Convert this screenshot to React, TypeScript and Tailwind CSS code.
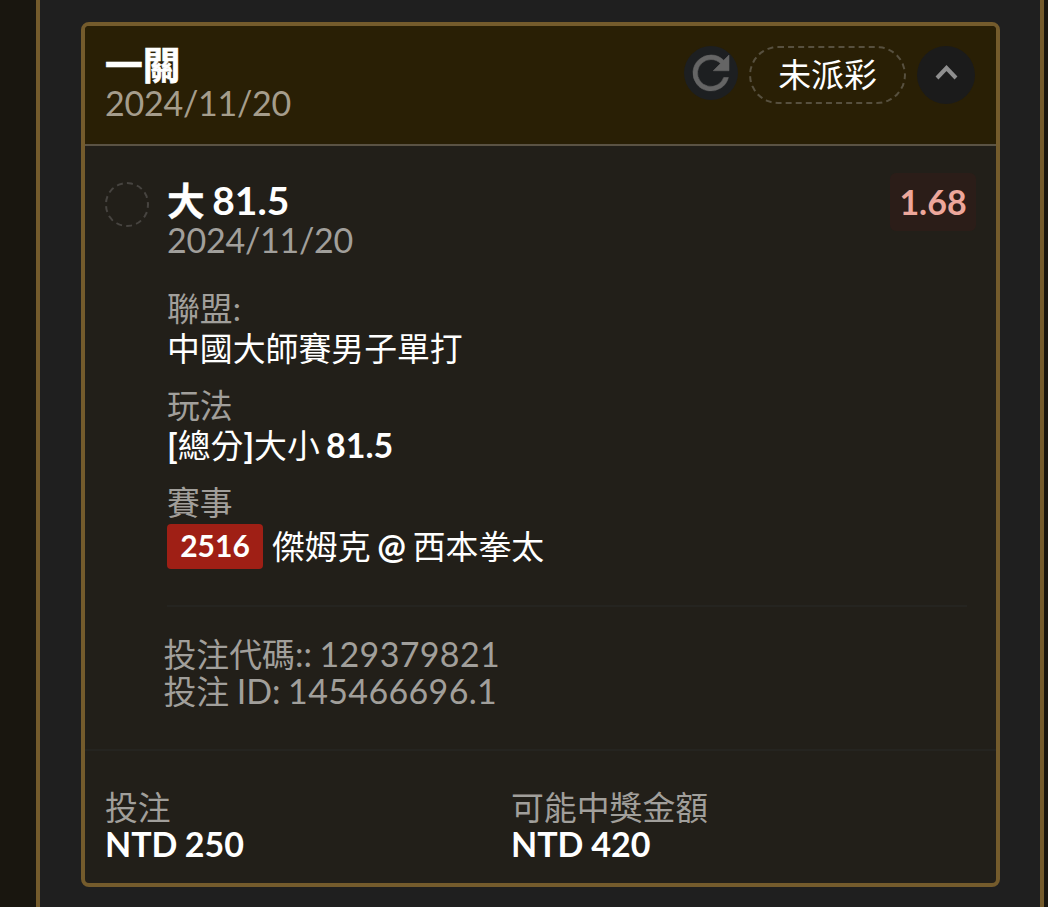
import React from 'react';

const DETAILS = {
  title: '一關',
  date: '2024/11/20',
  odds: '1.68',
  league: '中國大師賽男子單打',
};

const Zh = ({ children }: { children: React.ReactNode }) => (
  <span className="text-[0.967em] leading-none">{children}</span>
);

const Label = ({ children }: { children: React.ReactNode }) => (
  <div className="text-[#a19f9b] font-normal">
    <Zh>{children}</Zh>
  </div>
);

const CardHeader = () => (
  <header className="flex justify-between h-[120px] pt-[18px] pl-5 pr-[21px] bg-[#291f05] border-b-2 border-[#5b5344]">
    <div>
      <h2 className="text-[39px] leading-[40px] font-bold [-webkit-text-stroke:0.7px_white]"><Zh>{DETAILS.title}</Zh></h2>
      <p className="leading-[37px] tracking-[-0.25px] text-[#a59d8c]">{DETAILS.date}</p>
    </div>
    <div className="flex items-start pt-[2px]">
      <button className="flex items-center justify-center size-[54px] rounded-full bg-[#1d1f21] text-[#656565]">
        <svg width="54" height="54" viewBox="0 0 24 24" fill="currentColor" stroke="currentColor" strokeWidth="0.25">
          <path d="M17.65 6.35A7.96 7.96 0 0 0 12 4a8 8 0 1 0 7.73 10h-2.08A6 6 0 1 1 12 6c1.66 0 3.14.69 4.22 1.78L13 11h7V4l-2.35 2.35z" />
        </svg>
      </button>
      <div className="ml-[11px] w-[157px] h-[58px] rounded-full border-2 border-dashed border-[#57503f] text-center leading-[52px]">
        <Zh>未派彩</Zh>
      </div>
      <button className="ml-[11px] flex items-center justify-center size-[58px] rounded-full bg-[#1b1b1b]">
        <svg width="58" height="58" viewBox="0 0 58 58" fill="none">
          <path d="M20 32 L29.5 22 L39 32" stroke="#8f8f8f" strokeWidth="4" />
        </svg>
      </button>
    </div>
  </header>
);

const Selection = () => (
  <div className="flex pl-5 pr-5 pt-8">
    <div className="mt-1 w-[44px] h-[45px] shrink-0 rounded-full border-2 border-dashed border-[#474440]" />
    <div className="ml-[18px] flex-1">
      <div className="flex justify-between">
        <div>
          <h3 className="pt-px text-[39px] leading-[42px] font-bold [word-spacing:-2px]">
            <span className="[-webkit-text-stroke:0.3px_white]"><Zh>大</Zh></span> 81.5
          </h3>
          <p className="leading-[38px] mb-px tracking-[-0.25px] text-[#a19f9b]">{DETAILS.date}</p>
        </div>
        <div className="-mt-[5px] h-[58px] w-[86px] rounded-md bg-[#2b1d18] text-center font-bold leading-[58px] text-[#eda79b]">
          {DETAILS.odds}
        </div>
      </div>

      <div className="mt-7 leading-[40px]">
        <Label>聯盟:</Label>
        <div><Zh>{DETAILS.league}</Zh></div>
      </div>
      <div className="mt-[17px] leading-[40px] font-bold">
        <Label>玩法</Label>
        <div className="[word-spacing:-2px]">[<span className="font-normal"><Zh>總分</Zh></span>]<span className="font-normal"><Zh>大小</Zh></span> 81.5</div>
      </div>
      <div className="mt-[17px] leading-[40px]">
        <Label>賽事</Label>
        <div className="mt-[2px] flex h-[45px] leading-[43px]">
          <span className="w-24 mr-[9px] rounded bg-[#9f1f15] text-center text-[30px] font-bold">2516</span>
          <span className="[word-spacing:-2px]"><Zh>傑姆克</Zh> <b>@</b> <Zh>西本拳太</Zh></span>
        </div>
      </div>

      <div className="mt-[36px] mr-[9px] h-[2px] bg-[#252420]" />
      <div className="-ml-[3.5px] mt-[28px] leading-[37px] text-[#a19f9b] [word-spacing:-1.2px]">
        <p><Zh>投注代碼</Zh>:: <span className="tracking-[0.35px]">129379821</span></p>
        <p><Zh>投注</Zh> ID: <span className="tracking-[0.35px]">145466696.1</span></p>
      </div>
    </div>
  </div>
);

const CardFooter = () => (
  <footer className="mt-[40px] grid grid-cols-[406px_1fr] border-t-2 border-[#252420] pl-5 pt-[37px] leading-[37px]">
    <div>
      <Label>投注</Label>
      <div className="font-bold [word-spacing:-1px]">NTD 250</div>
    </div>
    <div>
      <Label>可能中獎金額</Label>
      <div className="font-bold [word-spacing:-0.5px]">NTD 420</div>
    </div>
  </footer>
);

export default function App() {
  return (
    <div className="h-[907px] w-[1048px] overflow-hidden bg-[#19160f] pl-9 pr-1 text-[34px] text-white font-['Lato','Noto_Sans_CJK_TC',sans-serif]">
      <main className="h-full border-x-4 border-[#745b2c] bg-[#1f1f1f] pl-[41px] pr-10 pt-[22px]">
        <article className="h-[865px] overflow-hidden rounded-lg border-4 border-[#745b2c] bg-[#221f19]">
          <CardHeader />
          <Selection />
          <CardFooter />
        </article>
      </main>
    </div>
  );
}
